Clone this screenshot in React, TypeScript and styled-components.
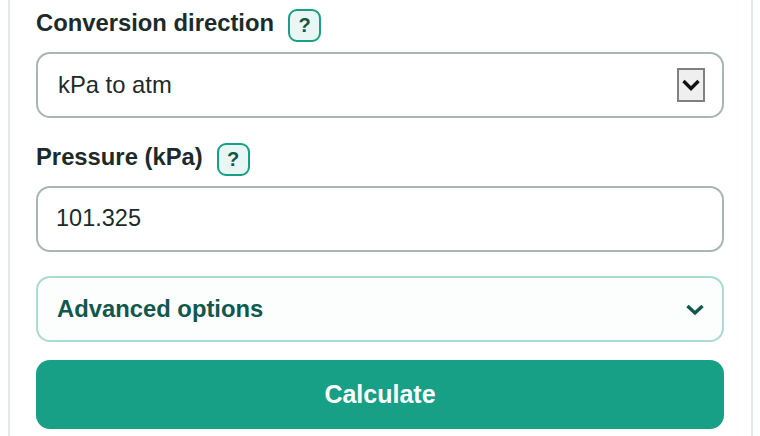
import styled, { createGlobalStyle } from "styled-components";

const GlobalStyle = createGlobalStyle`
  html, body {
    margin: 0;
    padding: 0;
    height: 436px;
    overflow: hidden;
    background: #fff;
  }
`;

const Page = styled.div`
  height: 436px;
  padding: 0 7px 0 8px;
  box-sizing: border-box;
  font-family: "Liberation Sans", Arial, sans-serif;
  color: #1c2b29;
`;

const Card = styled.div`
  height: 436px;
  box-sizing: border-box;
  background: #fff;
  border-left: 2px solid #e1e9e7;
  border-right: 2px solid #e1e9e7;
  padding: 8px 27px 0 26px;
  display: flex;
  flex-direction: column;
`;

const Field = styled.div`
  display: flex;
  flex-direction: column;
  gap: 10px;
  margin-bottom: 24px;
`;

const LabelRow = styled.div`
  display: flex;
  align-items: flex-end;
  gap: 14px;
  height: 34px;
`;

const Label = styled.label`
  align-self: flex-start;
  font-size: 23.8px;
  font-weight: 700;
  line-height: 30px;
`;

const Help = styled.button`
  width: 33px;
  height: 33px;
  box-sizing: border-box;
  padding: 0;
  border: 2px solid #17a085;
  border-radius: 9px;
  background: #e9f6f3;
  color: #11574c;
  font-family: inherit;
  font-size: 20px;
  font-weight: 700;
`;

const SelectBox = styled.div`
  height: 66px;
  box-sizing: border-box;
  border: 2px solid #a9b7b4;
  border-radius: 14px;
  background: #fff;
  padding: 0 17px 0 20px;
  display: flex;
  align-items: center;
  justify-content: space-between;
  font-size: 23.8px;
`;

const ArrowBox = styled.span`
  width: 28px;
  height: 34px;
  box-sizing: border-box;
  border: 2px solid #808080;
  background: #efefef;
  display: flex;
  align-items: center;
  justify-content: center;
`;

const TextInput = styled.input`
  height: 66px;
  box-sizing: border-box;
  border: 2px solid #a9b7b4;
  border-radius: 14px;
  background: #fff;
  padding: 0 18px 2px;
  font-family: inherit;
  font-size: 23.5px;
  color: inherit;
  outline: none;
`;

const Advanced = styled.div`
  height: 66px;
  box-sizing: border-box;
  border: 2px solid #a9dbd0;
  border-radius: 14px;
  background: #fbfefd;
  padding: 0 18px 0 19px;
  display: flex;
  align-items: center;
  justify-content: space-between;
  font-size: 23.8px;
  font-weight: 700;
  color: #11574c;
`;

const Calculate = styled.button`
  height: 69px;
  margin-top: 18px;
  border: none;
  border-radius: 14px;
  background: #17a085;
  color: #fff;
  font-family: inherit;
  font-size: 25px;
  font-weight: 700;
`;

const App = () => {
  return (
    <Page>
      <GlobalStyle />
      <Card>
        <Field>
          <LabelRow>
            <Label>Conversion direction</Label>
            <Help>?</Help>
          </LabelRow>
          <SelectBox>
            kPa to atm
            <ArrowBox>
              <svg width="18" height="12" viewBox="0 0 18 12" fill="none">
                <path d="M1.5 2l7.5 7.5L16.500 2" stroke="#111" strokeWidth="3.4" />
              </svg>
            </ArrowBox>
          </SelectBox>
        </Field>
        <Field>
          <LabelRow>
            <Label>Pressure (kPa)</Label>
            <Help>?</Help>
          </LabelRow>
          <TextInput defaultValue="101.325" />
        </Field>
        <Advanced>
          Advanced options
          <svg width="18" height="13" viewBox="0 0 18 13" fill="none">
            <path d="M1.500 3l7.500 7 7.500-7" stroke="#11574c" strokeWidth="3.4" />
          </svg>
        </Advanced>
        <Calculate>Calculate</Calculate>
      </Card>
    </Page>
  );
};

export default App;
